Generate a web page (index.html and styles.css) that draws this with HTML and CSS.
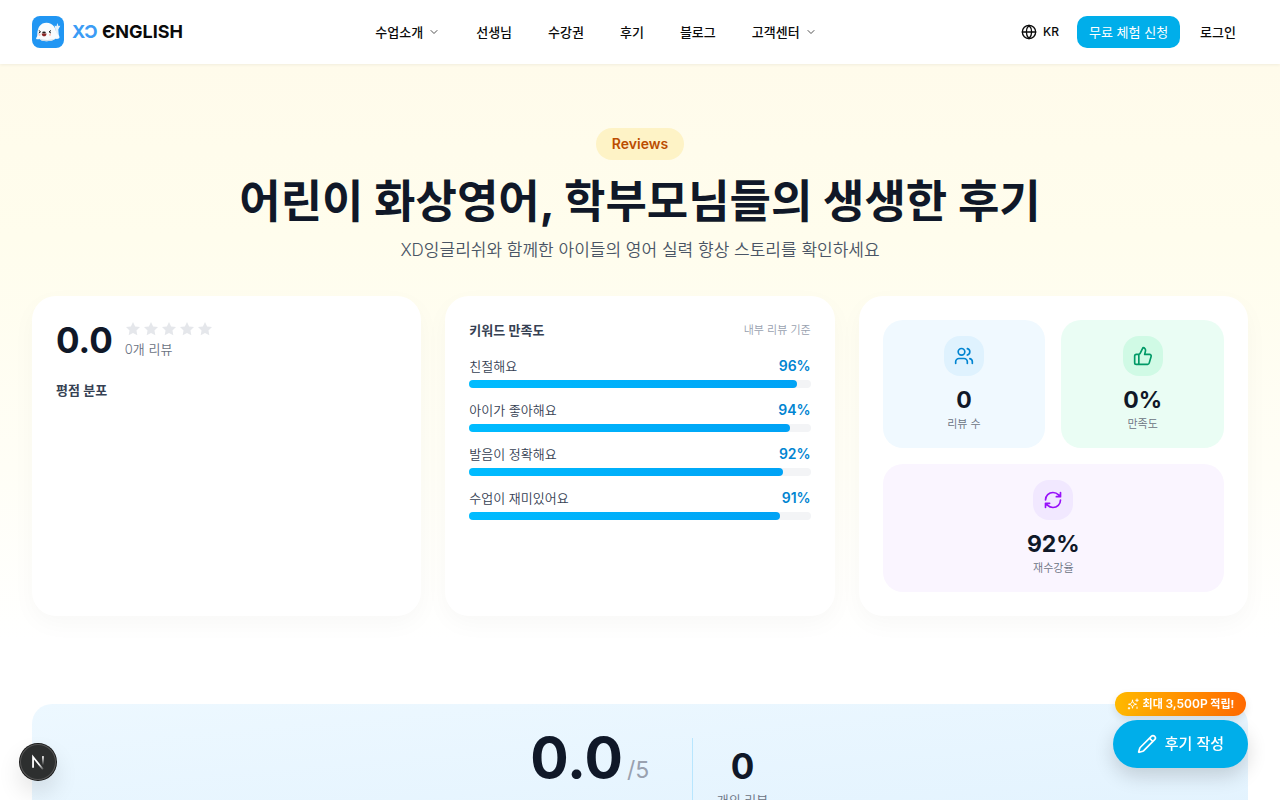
FILE: index.html
```
<!DOCTYPE html>
<html lang="ko">
<head>
  <meta charset="utf-8">
  <meta name="viewport" content="width=device-width, initial-scale=1">
  <title>XD ENGLISH</title>
  <link rel="stylesheet" href="styles.css">
</head>
<body>
  <header class="header">
    <a class="logo" href="#">
      <svg class="logo-mark" viewBox="0 0 32 32" aria-hidden="true">
        <rect width="32" height="32" rx="8" fill="#2196f3"/>
        <path d="M23.500 14 22.500 9.500l2 .7L25.300 7l1.200 3 1.800-.3-2 3.800.5 6-3 2z" fill="#e6f1fa"/>
        <path d="M4 22.500c.3-1.200 1.300-1.700 1.300-3.500C5.300 11.500 8.500 6.700 14.500 6.700c6.500 0 9.300 5.300 9.800 10 1 1.800 3.200 2.300 3.200 4.500 0 1.500-2 2-4 1.600C21 25 17.500 25.200 14.500 25.200c-3.500 0-5.500-.5-7-2.200-1.500.5-3 .5-3.500-.5z" fill="#f8fbfd"/>
        <path d="M7 22.500c4 1.700 11 1.900 16 .3-2 2-5.500 2.400-8.500 2.400-3.500 0-6-.6-7.500-2.700z" fill="#ccdbe6"/>
        <path d="m6.800 14.500 1.800 1.300-1.800 1.300M19 14.500l-2 1.300 2 1.300" fill="none" stroke="#222" stroke-width="1"/>
        <ellipse cx="12" cy="16.500" rx="1.800" ry="1.100" fill="#26201f"/>
        <path d="M9.700 17.500h4.800c0 3.800-4.800 3.800-4.800 0z" fill="#8b2626"/>
        <circle cx="7.500" cy="18.800" r="1.100" fill="#ffc2b8"/>
        <circle cx="18" cy="18.800" r="1.100" fill="#ffc2b8"/>
      </svg>
      <span class="logo-text"><span class="logo-xd">XƆ</span> ЄNGLISH</span>
    </a>
    <nav class="nav">
      <a href="#">수업소개 <svg class="chevron" viewBox="0 0 24 24"><path d="m6 9 6 6 6-6"/></svg></a>
      <a href="#">선생님</a>
      <a href="#">수강권</a>
      <a href="#">후기</a>
      <a href="#">블로그</a>
      <a href="#">고객센터 <svg class="chevron" viewBox="0 0 24 24"><path d="m6 9 6 6 6-6"/></svg></a>
    </nav>
    <div class="actions">
      <button class="lang" type="button">
        <svg class="icon-16" viewBox="0 0 24 24"><circle cx="12" cy="12" r="10"/><path d="M12 2a14.500 14.500 0 0 0 0 20 14.500 14.500 0 0 0 0-20M2 12h20"/></svg>
        KR
      </button>
      <a class="trial" href="#">무료 체험 신청</a>
      <a class="login" href="#">로그인</a>
    </div>
  </header>

  <main>
    <section class="hero">
      <span class="badge">Reviews</span>
      <h1>어린이 화상영어, 학부모님들의 생생한 후기</h1>
      <p class="subtitle">XD잉글리쉬와 함께한 아이들의 영어 실력 향상 스토리를 확인하세요</p>

      <div class="cards">
        <div class="card">
          <div class="score">
            <strong>0.0</strong>
            <div>
              <div class="stars">
                <svg viewBox="0 0 24 24"><path d="m12 1.500 3.200 6.600 7.300 1-5.300 5.100 1.300 7.200L12 18l-6.500 3.400 1.300-7.200L1.500 9.100l7.300-1z"/></svg>
                <svg viewBox="0 0 24 24"><path d="m12 1.500 3.200 6.600 7.300 1-5.300 5.100 1.300 7.200L12 18l-6.500 3.400 1.300-7.200L1.500 9.100l7.300-1z"/></svg>
                <svg viewBox="0 0 24 24"><path d="m12 1.500 3.200 6.600 7.300 1-5.300 5.100 1.300 7.200L12 18l-6.500 3.400 1.300-7.200L1.500 9.100l7.300-1z"/></svg>
                <svg viewBox="0 0 24 24"><path d="m12 1.500 3.200 6.600 7.300 1-5.300 5.100 1.300 7.200L12 18l-6.500 3.400 1.300-7.200L1.500 9.100l7.300-1z"/></svg>
                <svg viewBox="0 0 24 24"><path d="m12 1.500 3.200 6.600 7.300 1-5.300 5.100 1.300 7.200L12 18l-6.500 3.400 1.300-7.200L1.500 9.100l7.300-1z"/></svg>
              </div>
              <p class="count">0개 리뷰</p>
            </div>
          </div>
          <h2 class="card-title">평점 분포</h2>
        </div>

        <div class="card">
          <div class="card-head">
            <h2 class="card-title">키워드 만족도</h2>
            <span class="note">내부 리뷰 기준</span>
          </div>
          <ul class="keywords">
            <li>
              <div class="row"><span>친절해요</span><b>96%</b></div>
              <div class="track"><div class="bar" style="width:96%"></div></div>
            </li>
            <li>
              <div class="row"><span>아이가 좋아해요</span><b>94%</b></div>
              <div class="track"><div class="bar" style="width:94%"></div></div>
            </li>
            <li>
              <div class="row"><span>발음이 정확해요</span><b>92%</b></div>
              <div class="track"><div class="bar" style="width:92%"></div></div>
            </li>
            <li>
              <div class="row"><span>수업이 재미있어요</span><b>91%</b></div>
              <div class="track"><div class="bar" style="width:91%"></div></div>
            </li>
          </ul>
        </div>

        <div class="card tiles">
          <div class="tile blue">
            <span class="tile-icon"><svg class="icon-20" viewBox="0 0 24 24"><path d="M16 21v-2a4 4 0 0 0-4-4H6a4 4 0 0 0-4 4v2M16 3.128a4 4 0 0 1 0 7.744M22 21v-2a4 4 0 0 0-3-3.870"/><circle cx="9" cy="7" r="4"/></svg></span>
            <strong>0</strong>
            <span class="tile-label">리뷰 수</span>
          </div>
          <div class="tile green">
            <span class="tile-icon"><svg class="icon-20" viewBox="0 0 24 24"><path d="M7 10v12M15 5.880 14 10h5.830a2 2 0 0 1 1.920 2.560l-2.330 8A2 2 0 0 1 17.500 22H4a2 2 0 0 1-2-2v-8a2 2 0 0 1 2-2h2.760a2 2 0 0 0 1.790-1.110L12 2a3.130 3.130 0 0 1 3 3.880Z"/></svg></span>
            <strong>0%</strong>
            <span class="tile-label">만족도</span>
          </div>
          <div class="tile purple">
            <span class="tile-icon"><svg class="icon-20" viewBox="0 0 24 24"><path d="M3 12a9 9 0 0 1 9-9 9.750 9.750 0 0 1 6.740 2.740L21 8M21 3v5h-5M21 12a9 9 0 0 1-9 9 9.750 9.750 0 0 1-6.740-2.740L3 16M8 16H3v5"/></svg></span>
            <strong>92%</strong>
            <span class="tile-label">재수강율</span>
          </div>
        </div>
      </div>
    </section>

    <section class="summary-wrap">
      <div class="summary">
        <div class="average"><strong>0.0</strong><span>/5</span></div>
        <div class="divider"></div>
        <div class="total">
          <strong>0</strong>
          <span>개의 리뷰</span>
        </div>
      </div>
    </section>
  </main>

  <div class="floating">
    <span class="point">
      <svg class="icon-12" viewBox="0 0 24 24"><path d="M11 4.500c.6 5.500 2.500 7.400 8 8-5.500.6-7.400 2.500-8 8-.6-5.500-2.500-7.400-8-8 5.500-.6 7.400-2.500 8-8zM20 2v5M17.500 4.500h5M4 19v3M2.500 20.500h3M20 18v3"/></svg>
      <span>최대 <b>3,500P</b> 적립!</span>
    </span>
    <button class="write" type="button">
      <svg class="icon-20" viewBox="0 0 24 24"><path d="M21.174 6.812a1 1 0 0 0-3.986-3.987L3.842 16.174a2 2 0 0 0-.5.830l-1.321 4.352a.5.5 0 0 0 .623.622l4.353-1.320a2 2 0 0 0 .830-.497zM15 5l4 4"/></svg>
      후기 작성
    </button>
  </div>

  <button class="dev" type="button" aria-label="N">
    <svg viewBox="0 0 40 40">
      <defs>
        <linearGradient id="fade1" x1="0" y1="0" x2="1" y2="1"><stop offset=".6" stop-color="#fff"/><stop offset="1" stop-color="#fff" stop-opacity=".2"/></linearGradient>
        <linearGradient id="fade2" x1="0" y1="0" x2="0" y2="1"><stop offset="0" stop-color="#fff"/><stop offset="1" stop-color="#fff" stop-opacity="0"/></linearGradient>
      </defs>
      <path d="M14.500 26.500V14.500L25.500 28" fill="none" stroke="url(#fade1)" stroke-width="2"/>
      <rect x="24.500" y="13.500" width="2" height="10" fill="url(#fade2)"/>
    </svg>
  </button>
</body>
</html>
```

FILE: styles.css
```
* { box-sizing: border-box; }
body {
  margin: 0;
  background: #fff;
  color: #101828;
  font-family: Inter, "Noto Sans CJK KR", sans-serif;
  font-size: 13px;
  font-weight: 350;
  line-height: 20px;
}
h1, h2, p, ul { margin: 0; padding: 0; }
ul { list-style: none; }
a { color: inherit; text-decoration: none; }
button { font: inherit; color: inherit; border: 0; background: none; cursor: pointer; }
strong { font-weight: 700; }
svg { display: block; flex: none; }
.icon-12, .icon-16, .icon-20, .chevron {
  fill: none;
  stroke: currentColor;
  stroke-width: 2;
  stroke-linecap: round;
  stroke-linejoin: round;
}
.icon-12 { width: 12px; height: 12px; }
.icon-16 { width: 16px; height: 16px; }
.icon-20 { width: 20px; height: 20px; }

/* header */
.header {
  position: sticky;
  top: 0;
  z-index: 10;
  display: flex;
  align-items: center;
  justify-content: space-between;
  height: 64px;
  padding: 0 32px;
  background: #fff;
  box-shadow: 0 1px 3px rgba(0, 0, 0, .06);
  color: #0a0a0a;
  font-weight: 500;
}
.logo { display: flex; align-items: center; gap: 8px; }
.logo-mark { width: 32px; height: 32px; }
.logo-text { font-size: 18px; font-weight: 700; }
.logo-xd { color: #3b9cf5; }
.nav { display: flex; gap: 36px; }
.nav a { display: flex; align-items: center; gap: 5px; }
.chevron { width: 12px; height: 12px; opacity: .7; }
.actions { display: flex; align-items: center; gap: 8px; }
.lang { display: flex; align-items: center; gap: 6px; padding: 8px 10px 8px 12px; font-size: 12px; line-height: 16px; }
.trial { padding: 6px 12px; border-radius: 10px; background: #00aeea; color: #fff; font-weight: 400; }
.login { padding: 6px 12px; }

/* hero */
.hero {
  display: flex;
  flex-direction: column;
  align-items: center;
  padding: 64px 32px 24px;
  background: linear-gradient(#fffbeb, #fffded 30%, #fffef6 70%, #fff);
}
.badge { padding: 6px 16px; border-radius: 16px; background: #fef3c6; color: #bb4d00; font-size: 14px; font-weight: 600; }
h1 { margin-top: 18px; font-size: 45px; line-height: 48px; font-weight: 700; text-align: center; }
.subtitle { margin-top: 10px; font-size: 17px; line-height: 28px; color: #4a5565; text-align: center; }
.cards { display: grid; grid-template-columns: repeat(3, 1fr); gap: 24px; width: 100%; margin-top: 32px; }
.card { padding: 24px; border-radius: 24px; background: #fff; box-shadow: 0 8px 24px rgba(0, 0, 0, .03); }
.card-title { font-size: 13px; font-weight: 600; color: #364153; }
.score { display: flex; align-items: center; gap: 12px; margin-bottom: 20px; }
.score strong { font-size: 35px; line-height: 40px; }
.stars { display: flex; gap: 2px; }
.stars svg { width: 16px; height: 16px; fill: #e5e7eb; }
.count { color: #6a7282; margin-top: 2px; }
.card-head { display: flex; justify-content: space-between; margin-bottom: 16px; }
.note { font-size: 11px; color: #99a1af; }
.keywords { display: flex; flex-direction: column; gap: 12px; }
.row { display: flex; justify-content: space-between; margin-bottom: 4px; color: #364153; }
.row b { font-size: 14px; font-weight: 600; color: #0084d1; }
.track { height: 8px; border-radius: 4px; background: #f3f4f6; }
.bar { height: 8px; border-radius: 4px; background: linear-gradient(90deg, #00bcff, #00a2f5); }

.tiles { display: grid; grid-template-columns: 1fr 1fr; gap: 16px; }
.tile { display: flex; flex-direction: column; align-items: center; padding: 16px; border-radius: 20px; }
.tile-icon { display: flex; align-items: center; justify-content: center; width: 40px; height: 40px; margin-bottom: 8px; border-radius: 16px; }
.tile strong { font-size: 23px; line-height: 32px; }
.tile-label { font-size: 11px; line-height: 16px; color: #6a7282; }
.blue { background: #f0f9ff; }
.blue .tile-icon { background: #dff2fe; color: #0084d1; }
.green { background: #eafdf4; }
.green .tile-icon { background: #d0fae5; color: #009966; }
.purple { grid-column: span 2; background: #faf5ff; }
.purple .tile-icon { background: #f1e8ff; color: #9810fa; }

/* rating summary */
.summary-wrap { padding: 64px 32px; }
.summary {
  display: flex;
  align-items: center;
  justify-content: center;
  gap: 24px;
  padding: 24px;
  border-radius: 20px;
  background: linear-gradient(175deg, #edf8ff, #e1f2fe);
}
.average { display: flex; align-items: baseline; justify-content: center; gap: 4px; width: 156px; height: 100px; }
.average strong { font-size: 57px; line-height: 60px; }
.average span { font-size: 23px; font-weight: 400; color: #99a1af; }
.divider { width: 1px; height: 80px; background: #b8e6fe; }
.total { display: flex; flex-direction: column; align-items: center; gap: 4px; color: #6a7282; }
.total strong { font-size: 35px; line-height: 40px; color: #101828; }

/* floating buttons */
.floating { position: fixed; right: 32px; bottom: 32px; display: flex; flex-direction: column; align-items: center; gap: 4px; color: #fff; }
.point {
  display: flex;
  align-items: center;
  gap: 4px;
  padding: 4px 12px;
  border-radius: 12px;
  background: linear-gradient(90deg, #ffb900, #ff6900);
  box-shadow: 0 4px 8px rgba(0, 0, 0, .1);
  font-size: 11px;
  line-height: 16px;
  font-weight: 700;
}
.point b { font-size: 12px; font-weight: 600; }
.write {
  display: flex;
  align-items: center;
  gap: 8px;
  padding: 12px 24px;
  border-radius: 24px;
  background: #00aeea;
  box-shadow: 0 8px 20px rgba(0, 0, 0, .16);
  color: #fff;
  font-size: 15px;
  line-height: 24px;
  font-weight: 500;
}
.dev {
  position: fixed;
  left: 20px;
  bottom: 20px;
  width: 36px;
  height: 36px;
  padding: 0;
  border-radius: 50%;
  background: #2d2f2f;
  box-shadow: inset 0 0 0 1px #555, 0 0 0 1px #171717, 0 12px 24px rgba(0, 0, 0, .12);
}
```
